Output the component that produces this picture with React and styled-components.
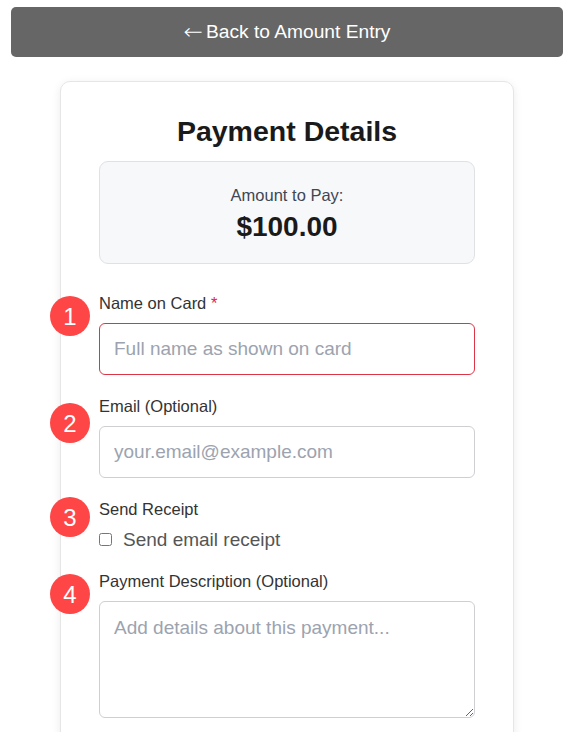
import React from "react";
import styled, { createGlobalStyle } from "styled-components";

const Global = createGlobalStyle`
  html, body { margin: 0; padding: 0; background: #fff; }
  body { font-family: "Liberation Sans", Arial, sans-serif; }
  * { box-sizing: border-box; }
`;

const Page = styled.div`
  padding: 7px 9px 0 11px;
`;

const BackButton = styled.button`
  display: flex;
  align-items: center;
  justify-content: center;
  gap: 4px;
  width: 100%;
  height: 50px;
  border: none;
  border-radius: 5px;
  background: #666666;
  color: #fff;
  font-family: "Liberation Sans", Arial, sans-serif;
  font-size: 19.2px;
  cursor: pointer;
`;

const Arrow = styled.span`
  font-family: "DejaVu Sans", sans-serif;
  font-size: 22px;
  line-height: 1;
  font-weight: 300;
  transform: scaleX(1.05);
`;

const Card = styled.div`
  width: 454px;
  margin: 24px 0 0 49px;
  background: #fff;
  border: 1px solid #e6e6e6;
  border-radius: 10px;
  box-shadow: 0 2px 10px rgba(0, 0, 0, 0.08);
  padding: 33px 38px 40px;
`;

const Title = styled.h2`
  margin: 0 0 14px;
  text-align: center;
  font-size: 28.5px;
  line-height: 32px;
  font-weight: 700;
  color: #1a1a1a;
`;

const AmountBox = styled.div`
  background: #f7f8fa;
  border: 1px solid #dfe1e5;
  border-radius: 9px;
  padding: 21px 20px 20px;
  margin-bottom: 30px;
  text-align: center;
`;

const AmountLabel = styled.div`
  font-size: 16.5px;
  line-height: 24px;
  color: #3f4654;
  margin-bottom: 4px;
`;

const AmountValue = styled.div`
  font-size: 28px;
  line-height: 32px;
  font-weight: 700;
  color: #1a1a1a;
`;

const Group = styled.div`
  position: relative;
  margin-bottom: 22px;
`;

const Label = styled.label`
  display: block;
  font-size: 16.5px;
  line-height: 18px;
  color: #333;
  margin-bottom: 11px;
`;

const Req = styled.span`
  color: #e0263c;
`;

const Input = styled.input`
  display: block;
  width: 100%;
  height: 52px;
  padding: 0 14px;
  border: 1px solid ${(p) => (p.$error ? "#dc3545" : "#cfcfd3")};
  border-radius: 6px;
  font-family: "Liberation Sans", Arial, sans-serif;
  font-size: 19px;
  color: #333;
  outline: none;
  &::placeholder { color: #9ca3af; }
`;

const TextArea = styled.textarea`
  display: block;
  width: 100%;
  height: 117px;
  padding: 15px 14px;
  border: 1px solid #cfcfd3;
  border-radius: 6px;
  font-family: "Liberation Sans", Arial, sans-serif;
  font-size: 19px;
  color: #333;
  outline: none;
  &::placeholder { color: #9ca3af; }
`;

const CheckRow = styled.label`
  display: flex;
  align-items: center;
  gap: 11px;
  font-size: 19px;
  line-height: 21px;
  color: #555;
`;

const Check = styled.input`
  margin: 0;
  width: 13px;
  height: 13px;
`;

const Badge = styled.div`
  position: absolute;
  left: -49px;
  top: ${(p) => p.$top}px;
  width: 40px;
  height: 40px;
  border-radius: 50%;
  background: #ff4646;
  color: #fff;
  display: flex;
  align-items: center;
  justify-content: center;
  padding-top: 1px;
  font-size: 24px;
  font-family: "Liberation Sans", Arial, sans-serif;
`;

export default function App() {
  return (
    <Page>
      <Global />
      <BackButton>
        <Arrow>←</Arrow>
        Back to Amount Entry
      </BackButton>
      <Card>
        <Title>Payment Details</Title>
        <AmountBox>
          <AmountLabel>Amount to Pay:</AmountLabel>
          <AmountValue>$100.00</AmountValue>
        </AmountBox>

        <Group>
          <Badge $top={2}>1</Badge>
          <Label>
            Name on Card <Req>*</Req>
          </Label>
          <Input $error placeholder="Full name as shown on card" />
        </Group>

        <Group>
          <Badge $top={6}>2</Badge>
          <Label>Email (Optional)</Label>
          <Input placeholder="your.email@example.com" />
        </Group>

        <Group>
          <Badge $top={-3}>3</Badge>
          <Label>Send Receipt</Label>
          <CheckRow>
            <Check type="checkbox" />
            Send email receipt
          </CheckRow>
        </Group>

        <Group>
          <Badge $top={2}>4</Badge>
          <Label>Payment Description (Optional)</Label>
          <TextArea placeholder="Add details about this payment..." />
        </Group>
      </Card>
    </Page>
  );
}
